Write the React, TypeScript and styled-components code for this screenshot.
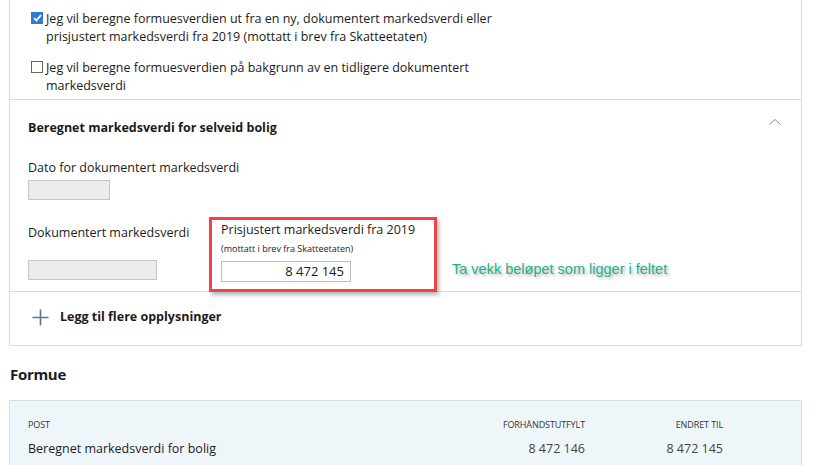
import React from 'react';
import styled, { createGlobalStyle } from 'styled-components';

const Global = createGlobalStyle`
  html, body { margin: 0; padding: 0; background: #ffffff; }
  body { font-family: "Open Sans", "Noto Sans", sans-serif; color: #1b1b1b; }
  * { box-sizing: border-box; }
`;

const Page = styled.div`
  width: 813px;
  height: 465px;
  overflow: hidden;
  padding: 0 11px 0 9px;
`;

const Card = styled.section`
  border: 1px solid #d9d9d9;
  border-top: none;
  background: #fff;
`;

const ChoiceList = styled.div`
  padding: 10px 20px 4px 21px;
  display: flex;
  flex-direction: column;
  gap: 13px;
  border-bottom: 1px solid #dcdcdc;
`;

const Choice = styled.label`
  display: flex;
  align-items: flex-start;
  gap: 3px;
  font-size: 12.5px;
  line-height: 18px;
  max-width: 470px;
`;

const Box = styled.span<{ $checked?: boolean }>`
  flex: none;
  width: 12px;
  height: 12px;
  margin-top: 2px;
  border: 1px solid ${p => (p.$checked ? '#2a7bd1' : '#666')};
  background: ${p => (p.$checked ? '#2a7bd1' : '#fff')};
  display: flex;
  align-items: center;
  justify-content: center;
`;

const Section = styled.div`
  padding: 19px 19px 0 18px;
  border-bottom: 1px solid #dcdcdc;
`;

const HeaderRow = styled.div`
  display: flex;
  justify-content: space-between;
  align-items: flex-start;
`;

const SectionTitle = styled.h3`
  margin: 0;
  font-size: 12.5px;
  font-weight: 700;
  line-height: 18px;
`;

const Chevron = styled.span`
  width: 14px;
  height: 10px;
  margin-top: -2px;
  display: flex;
`;

const Label = styled.div<{ $top?: number }>`
  font-size: 12.5px;
  line-height: 16px;
  margin-top: ${p => p.$top ?? 0}px;
`;

const Field = styled.div<{ $w: number; $top?: number }>`
  width: ${p => p.$w}px;
  height: 20px;
  margin-top: ${p => p.$top ?? 0}px;
  background: #ececec;
  border: 1px solid #c6c6c6;
`;

const ValueRow = styled.div`
  display: flex;
  align-items: stretch;
  margin-top: 17px;
`;

const Column = styled.div`
  width: 181px;
  padding-top: 8px;
  padding-bottom: 11px;
  display: flex;
  flex-direction: column;
  justify-content: space-between;
`;

const Highlight = styled.div`
  width: 228px;
  border: 3px solid #ef4349;
  box-shadow: 2px 3px 4px rgba(0, 0, 0, 0.28);
  padding: 2px 10px 7px 9px;
  margin-bottom: -1px;
  position: relative;
  background: #fff;
`;

const SmallNote = styled.div`
  font-size: 9px;
  line-height: 12px;
  margin-top: 5px;
`;

const Input = styled.div`
  width: 130px;
  height: 21px;
  margin-top: 6px;
  border: 1px solid #bdbdbd;
  background: #fff;
  font-size: 13px;
  line-height: 19px;
  text-align: right;
  padding-right: 6px;
`;

const Hint = styled.div`
  align-self: flex-end;
  margin: 0 0 13px 15px;
  font-family: "Liberation Sans", Arial, sans-serif;
  font-size: 14.5px;
  line-height: 17px;
  color: #25b08c;
  text-shadow: 2px 2px 3px rgba(0, 0, 0, 0.3);
`;

const AddRow = styled.div`
  display: flex;
  align-items: center;
  gap: 11px;
  padding: 16px 0 19px 22px;
  font-size: 12.5px;
  font-weight: 700;
  line-height: 18px;
`;

const Heading = styled.h2`
  margin: 18px 0 16px 1px;
  font-size: 15px;
  line-height: 20px;
  font-weight: 700;
  letter-spacing: -0.3px;
`;

const Table = styled.div`
  background: #eff6fa;
  border: 1px solid #d9dde0;
  padding: 18px 78px 12px 18px;
  display: grid;
  grid-template-columns: 1fr 140px 138px;
  row-gap: 9px;
`;

const Th = styled.div<{ $right?: boolean }>`
  font-size: 9px;
  line-height: 12px;
  text-transform: uppercase;
  color: #333;
  letter-spacing: -0.1px;
  text-align: ${p => (p.$right ? 'right' : 'left')};
`;

const Td = styled.div<{ $right?: boolean }>`
  font-size: 12.5px;
  line-height: 18px;
  color: ${p => (p.$right ? '#444' : '#1b1b1b')};
  text-align: ${p => (p.$right ? 'right' : 'left')};
`;

export default function App() {
  return (
    <>
      <Global />
      <Page>
        <Card>
          <ChoiceList>
            <Choice>
              <Box $checked>
                <svg width="9" height="8" viewBox="0 0 9 8">
                  <path d="M1 4.2 L3.4 6.4 L8 1.2" stroke="#fff" strokeWidth="1.8" fill="none" />
                </svg>
              </Box>
              <span>
                Jeg vil beregne formuesverdien ut fra en ny, dokumentert markedsverdi eller prisjustert
                markedsverdi fra 2019 (mottatt i brev fra Skatteetaten)
              </span>
            </Choice>
            <Choice>
              <Box />
              <span>Jeg vil beregne formuesverdien på bakgrunn av en tidligere dokumentert markedsverdi</span>
            </Choice>
          </ChoiceList>

          <Section>
            <HeaderRow>
              <SectionTitle>Beregnet markedsverdi for selveid bolig</SectionTitle>
              <Chevron>
                <svg width="14" height="10" viewBox="0 0 14 10">
                  <path d="M1.5 7.5 L7 2.5 L12.5 7.5" stroke="#8a8a8a" strokeWidth="1" fill="none" />
                </svg>
              </Chevron>
            </HeaderRow>
            <Label $top={23}>Dato for dokumentert markedsverdi</Label>
            <Field $w={82} $top={4} />
            <ValueRow>
              <Column>
                <Label>Dokumentert markedsverdi</Label>
                <Field $w={129} />
              </Column>
              <Highlight>
                <Label>Prisjustert markedsverdi fra 2019</Label>
                <SmallNote>(mottatt i brev fra Skatteetaten)</SmallNote>
                <Input>8 472 145</Input>
              </Highlight>
              <Hint>Ta vekk beløpet som ligger i feltet</Hint>
            </ValueRow>
          </Section>

          <AddRow>
            <svg width="17" height="17" viewBox="0 0 17 17">
              <path d="M8.5 0.5 V16.5 M0.5 8.5 H16.5" stroke="#587991" strokeWidth="1.6" fill="none" />
            </svg>
            <span>Legg til flere opplysninger</span>
          </AddRow>
        </Card>

        <Heading>Formue</Heading>

        <Table>
          <Th>Post</Th>
          <Th $right>Forhåndstutfylt</Th>
          <Th $right>Endret til</Th>
          <Td>Beregnet markedsverdi for bolig</Td>
          <Td $right>8 472 146</Td>
          <Td $right>8 472 145</Td>
        </Table>
      </Page>
    </>
  );
}
